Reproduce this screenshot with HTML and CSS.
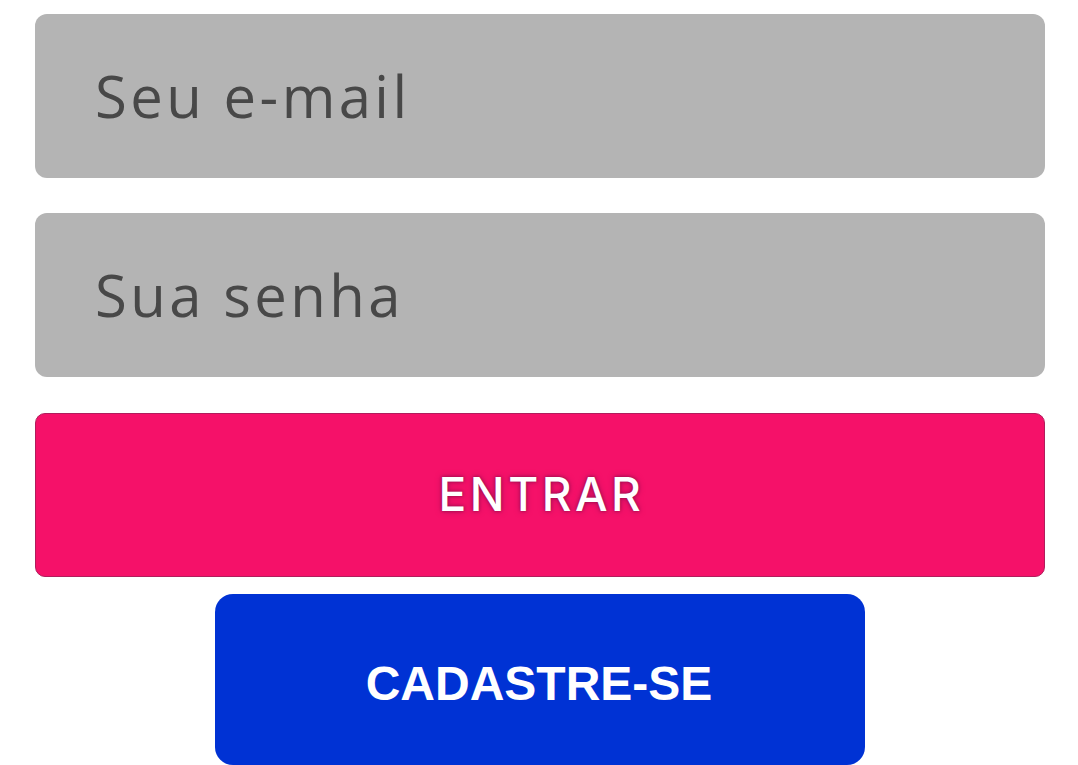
FILE: index.html
```html
<!DOCTYPE html>
<html lang="pt">
<head>
<meta charset="utf-8">
<link rel="stylesheet" href="styles.css">
</head>
<body>
<form class="login">
  <div class="field"><span class="placeholder">Seu e-mail</span></div>
  <div class="field field-second"><span class="placeholder">Sua senha</span></div>
  <button type="button" class="btn-enter">ENTRAR</button>
  <button type="button" class="btn-signup">CADASTRE-SE</button>
</form>
</body>
</html>
```
FILE: styles.css
```css
html, body {
  margin: 0;
  padding: 0;
  background: #ffffff;
}
.login {
  display: flex;
  flex-direction: column;
  padding: 14px 33px 0 35px;
}
.field {
  height: 164px;
  background: #b4b4b4;
  border-radius: 12px;
  display: flex;
  align-items: center;
  padding-left: 60px;
  padding-bottom: 2px;
  box-sizing: border-box;
}
.field-second {
  margin-top: 35px;
}
.placeholder {
  font-family: "Open Sans", sans-serif;
  font-weight: 400;
  font-size: 58px;
  color: #484848;
  letter-spacing: 3.4px;
}
.btn-enter {
  margin-top: 36px;
  height: 164px;
  background: #f51169;
  border: 1px solid #b01d5c;
  border-radius: 10px;
  color: #ffffff;
  font-family: Inter, sans-serif;
  font-weight: 500;
  font-size: 46px;
  letter-spacing: 3.5px;
  padding: 0 0 2px 3px;
  text-shadow: 0 0 3px #8e0c48, 0 0 6px #b0105a;
  cursor: pointer;
}
.btn-signup {
  align-self: center;
  margin: 17px 0 0 0;
  width: 650px;
  height: 171px;
  background: #0032d4;
  border: none;
  border-radius: 18px;
  color: #ffffff;
  font-family: "Liberation Sans", Arial, sans-serif;
  font-weight: 700;
  font-size: 48px;
  padding: 8px 2px 0 0;
  cursor: pointer;
}
```
